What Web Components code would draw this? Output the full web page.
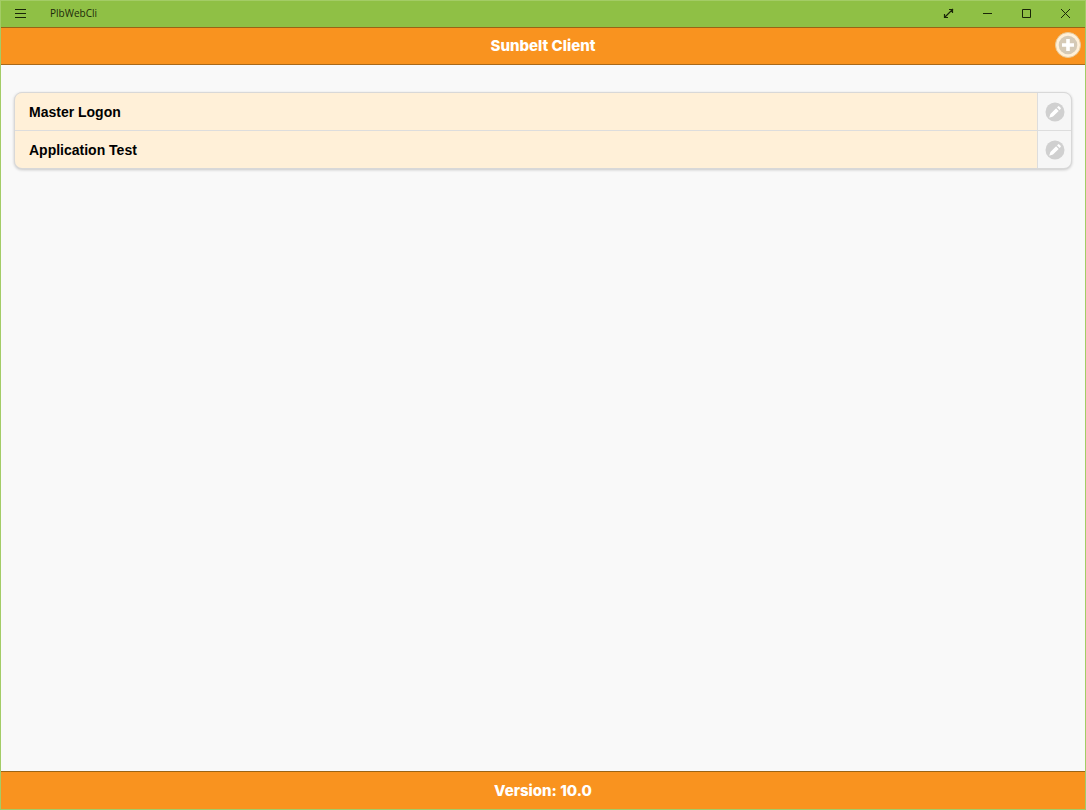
<!DOCTYPE html>
<html lang="en">
<head>
<meta charset="utf-8">
<title>PlbWebCli</title>
<style>
html, body { margin: 0; height: 100%; }
body { font-family: "Liberation Sans", Arial, sans-serif; background: #f9f9f9; }
</style>
</head>
<body>
<app-window>
  <title-bar slot="title">PlbWebCli</title-bar>
  <tool-bar slot="header" role="banner">Sunbelt Client<add-button slot="action"></add-button></tool-bar>
  <connection-list>
    <connection-item>Master Logon</connection-item>
    <connection-item>Application Test</connection-item>
  </connection-list>
  <tool-bar slot="footer" class="footer" role="contentinfo">Version: 10.0</tool-bar>
</app-window>
<script>
const define = (name, html) => {
  customElements.define(name, class extends HTMLElement {
    constructor() {
      super();
      this.attachShadow({ mode: "open" }).innerHTML = html;
    }
  });
};

define("app-window", `
<style>
:host { display: flex; flex-direction: column; min-height: 100vh; box-sizing: border-box;
  border: 1px solid #a3cc66; background: #f9f9f9; }
main { flex: 1; padding: 27px 13px; }
::slotted(.footer) { --edge-bottom: 0px; --bar-height: 37px; }
</style>
<slot name="title"></slot>
<slot name="header"></slot>
<main><slot></slot></main>
<slot name="footer"></slot>`);

define("title-bar", `
<style>
:host { display: flex; align-items: center; height: 26px; background: #8fc045; color: #1d2a0a;
  font: 10px "Open Sans", "Noto Sans", sans-serif; }
span { flex: 1; padding: 0 0 2px 10px; }
button { display: grid; place-items: center; width: 39px; height: 26px; padding: 0 2px 2px 0; border: 0;
  background: none; color: inherit; }
svg { width: 12px; height: 12px; fill: none; stroke: #1a2608; }
</style>
<button aria-label="Menu"><svg viewBox="0 0 12 12"><path d="M1 2.5h11M1 6.5h11M1 10.5h11"/></svg></button>
<span><slot></slot></span>
<button aria-label="Full screen"><svg viewBox="0 0 12 12"><path d="M2.5 10.5 11 2M7 2.5h3.5V6M2.5 7v3.5H6" stroke-width="1.2"/></svg></button>
<button aria-label="Minimize"><svg viewBox="0 0 12 12"><path d="M2 6.5h9"/></svg></button>
<button aria-label="Maximize"><svg viewBox="0 0 12 12"><path d="M2.5 2.5h8v8h-8z"/></svg></button>
<button aria-label="Close"><svg viewBox="0 0 12 12"><path d="M2 2l9 9M11 2l-9 9"/></svg></button>`);

define("tool-bar", `
<style>
:host { display: grid; grid-template-columns: 1fr auto 1fr; align-items: center; height: var(--bar-height, 36px);
  border-top: 1px solid #9a6414; border-bottom: var(--edge-bottom, 1px) solid #a9691a;
  background: #f9931f; color: #fff; }
h1 { grid-column: 2; margin: 0; font: 800 15px/20px Inter, "Liberation Sans", sans-serif; }
div { justify-self: end; padding: 0 4px 2px 0; }
</style>
<h1><slot></slot></h1>
<div><slot name="action"></slot></div>`);

define("add-button", `
<style>
:host { display: block; }
button { display: grid; place-items: center; width: 26px; height: 26px; padding: 0;
  border: 1px solid #e6c99a; border-radius: 50%; background: #fff0d8; }
svg { width: 22px; height: 22px; }
</style>
<button aria-label="Add connection"><svg viewBox="0 0 22 22">
<circle cx="11" cy="11" r="9.3" fill="#d5cab6"/>
<path d="M9.2 5h3.6v4.2H17v3.6h-4.2V17H9.2v-4.2H5V9.2h4.2z" fill="#fff"/></svg></button>`);

define("connection-list", `
<style>
:host { display: block; border: 1px solid #d8d8d8; border-radius: 8px; overflow: hidden;
  box-shadow: 0 1px 3px rgba(0,0,0,.2); background: #ddd; }
div { display: grid; gap: 1px; }
</style>
<div role="list"><slot></slot></div>`);

define("connection-item", `
<style>
:host { display: grid; grid-template-columns: 1fr 33px; gap: 1px; height: 37px; }
button { padding: 0; border: 0; background: #f6f6f6; display: grid; place-items: center; }
.open { justify-content: start; padding-left: 14px; background: #fff0d8; color: #000;
  font: bold 14px/20px "Liberation Sans", Arial, sans-serif; }
svg { width: 20px; height: 20px; }
</style>
<button class="open"><slot></slot></button>
<button aria-label="Edit connection"><svg viewBox="0 0 20 20">
<circle cx="10" cy="10" r="9.5" fill="#d0d0d0"/>
<path d="M4.2 15.8l1.2-3.8 5.7-5.7 2.6 2.6-5.7 5.7zM12 5.4l1-1q.7-.6 1.3 0l1.3 1.3q.6.6 0 1.3l-1 1z" fill="#fff"/></svg></button>`);

document.querySelectorAll("connection-item").forEach(item => item.setAttribute("role", "listitem"));
</script>
</body>
</html>
